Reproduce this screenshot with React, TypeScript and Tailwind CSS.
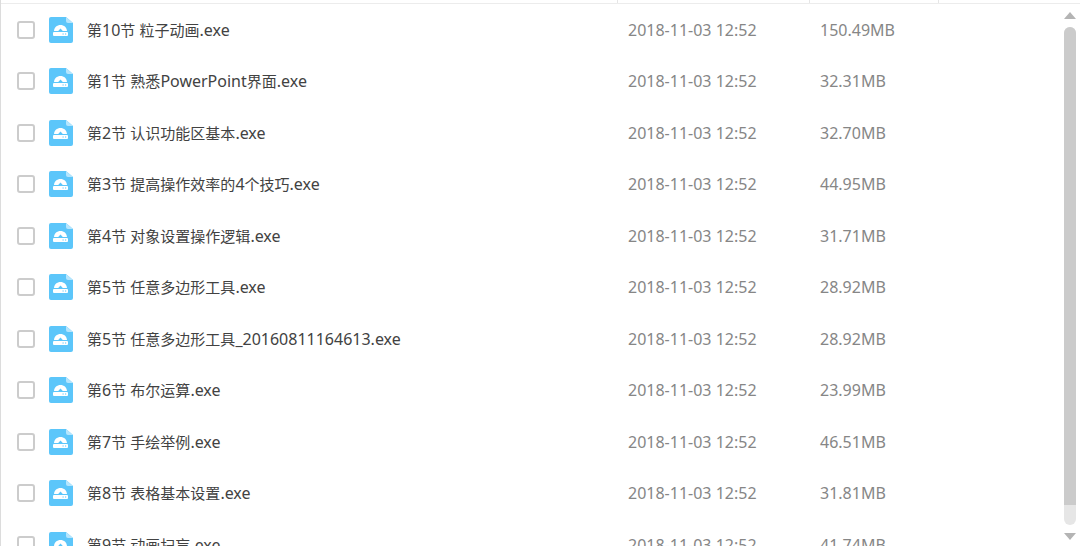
import { useState } from "react";

type FileItem = {
  name: string;
  date: string;
  size: string;
};

const FILES: FileItem[] = [
  { name: "第10节 粒子动画.exe", date: "2018-11-03 12:52", size: "150.49MB" },
  { name: "第1节 熟悉PowerPoint界面.exe", date: "2018-11-03 12:52", size: "32.31MB" },
  { name: "第2节 认识功能区基本.exe", date: "2018-11-03 12:52", size: "32.70MB" },
  { name: "第3节 提高操作效率的4个技巧.exe", date: "2018-11-03 12:52", size: "44.95MB" },
  { name: "第4节 对象设置操作逻辑.exe", date: "2018-11-03 12:52", size: "31.71MB" },
  { name: "第5节 任意多边形工具.exe", date: "2018-11-03 12:52", size: "28.92MB" },
  { name: "第5节 任意多边形工具_20160811164613.exe", date: "2018-11-03 12:52", size: "28.92MB" },
  { name: "第6节 布尔运算.exe", date: "2018-11-03 12:52", size: "23.99MB" },
  { name: "第7节 手绘举例.exe", date: "2018-11-03 12:52", size: "46.51MB" },
  { name: "第8节 表格基本设置.exe", date: "2018-11-03 12:52", size: "31.81MB" },
  { name: "第9节 动画扫盲.exe", date: "2018-11-03 12:52", size: "41.74MB" },
];

function ExeIcon() {
  return (
    <svg width="24" height="26" viewBox="0 0 24 26" className="shrink-0" aria-hidden="true">
      <path d="M2 0H17L24 6V24a2 2 0 0 1-2 2H2a2 2 0 0 1-2-2V2a2 2 0 0 1 2-2z" fill="#5cc6fa" />
      <path d="M17 0L24 6H19a2 2 0 0 1-2-2z" fill="#b5e5fd" />
      <path
        d="M5 14C5.300 10.200 8 8 11.500 8S17.700 10.200 18 14H13.800L11.500 11.600 9.200 14z"
        fill="#fff"
      />
      <rect x="4" y="15" width="15" height="4" rx="1" fill="#fff" />
      <path d="M13.500 16.500h1.200v1h-1.200zM16 16.500h1.200v1H16z" fill="#5cc6fa" />
    </svg>
  );
}

// Chinese glyphs look bigger than the latin ones, so they go one size down
function FileName({ name }: { name: string }) {
  return (
    <>
      {name.split(/([\u4e00-\u9fff]+)/).map((part, i) =>
        i % 2 === 1 ? (
          <span key={i} className="text-[15px]">
            {part}
          </span>
        ) : (
          part
        )
      )}
    </>
  );
}

function Scrollbar() {
  return (
    <div className="flex w-[22px] shrink-0 flex-col items-center gap-2 pt-2 pr-1 pb-1.5 pl-1.5">
      <svg width="12" height="7" viewBox="0 0 12 7" className="shrink-0" aria-hidden="true">
        <path d="M6 0L12 7H0z" fill="#b4b4b4" />
      </svg>
      <div className="w-3 flex-1 rounded-full bg-[#e6e6e6]">
        <div className="h-[96%] rounded-t-full bg-[#cbcbcb]" />
      </div>
      <svg width="12" height="7" viewBox="0 0 12 7" className="shrink-0" aria-hidden="true">
        <path d="M0 0H12L6 7z" fill="#b4b4b4" />
      </svg>
    </div>
  );
}

export default function App() {
  const [selected, setSelected] = useState<number[]>([]);

  const toggle = (index: number) => {
    setSelected((prev) =>
      prev.includes(index) ? prev.filter((i) => i !== index) : [...prev, index]
    );
  };

  return (
    <div className="flex h-screen flex-col overflow-hidden border-l border-[#dcdcdc] bg-white font-['Noto_Sans','Noto_Sans_CJK_SC',sans-serif] text-base leading-6">
      {/* bottom edge of the column headings */}
      <div className="flex h-1 shrink-0 border-b border-[#ececec]">
        <div className="flex-1 border-r border-[#e6e6e6]" />
        <div className="w-48 border-r border-[#e6e6e6]" />
        <div className="w-[129px] border-r border-[#e6e6e6]" />
        <div className="w-[141px]" />
      </div>

      <div className="flex min-h-0 flex-1">
        <div className="min-w-0 flex-1 overflow-hidden">
          <table className="w-full table-fixed text-left">
            <colgroup>
              <col />
              <col className="w-48" />
              <col className="w-[129px]" />
              <col className="w-[119px]" />
            </colgroup>
            <tbody>
              {FILES.map((file, i) => (
                <tr key={i} className="odd:h-[51px] even:h-[52px]">
                  <td className="p-0 pl-4 align-middle">
                    <div className="flex items-center">
                      <input
                        id={`file-${i}`}
                        type="checkbox"
                        checked={selected.includes(i)}
                        onChange={() => toggle(i)}
                        className="h-[18px] w-[18px] shrink-0 appearance-none rounded-[3px] border-2 border-[#cccccc] bg-white checked:border-[#5cc6fa] checked:bg-[#5cc6fa]"
                      />
                      <label
                        htmlFor={`file-${i}`}
                        className="flex min-w-0 items-center pl-3.5 whitespace-nowrap text-[#424242]"
                      >
                        <ExeIcon />
                        <span className="pl-3.5">
                          <FileName name={file.name} />
                        </span>
                      </label>
                    </div>
                  </td>
                  <td className="p-0 pl-2.5 align-middle whitespace-nowrap text-[#868686]">{file.date}</td>
                  <td className="p-0 pl-2.5 align-middle whitespace-nowrap text-[#868686]">{file.size}</td>
                  <td className="p-0" />
                </tr>
              ))}
            </tbody>
          </table>
        </div>
        <Scrollbar />
      </div>
    </div>
  );
}
